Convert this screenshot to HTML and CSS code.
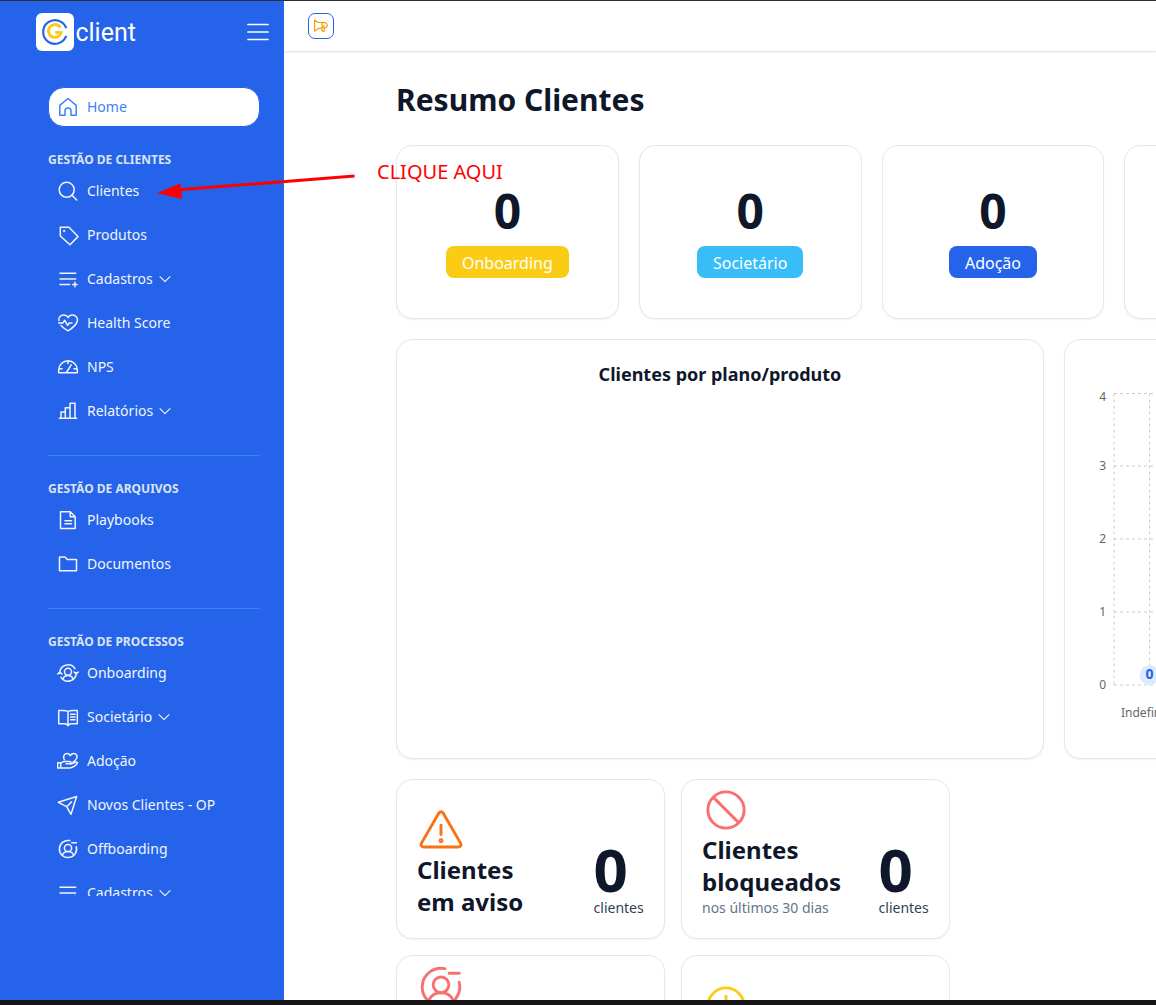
FILE: index.html
```html
<!DOCTYPE html>
<html lang="pt-BR">
<head>
<meta charset="utf-8">
<title>Gclient</title>
<link rel="stylesheet" href="styles.css">
</head>
<body>
<svg class="sprite" aria-hidden="true">
  <symbol id="list" viewBox="0 0 22 22"><path d="M3 5.3H18.700M3 11H18.700M3 16.500H12.700M15.600 16.500H20.100M17.900 14.300V18.700"/></symbol>
  <symbol id="chev" viewBox="0 0 12 12"><path d="M1 3.600L6 8.600L11 3.600"/></symbol>
  <symbol id="off" viewBox="0 0 22 22"><path d="M12.800 2.600A8.600 8.600 0 1 0 19.300 8.800M14.700 4.700H19.400"/><circle cx="11" cy="10" r="3.600"/><path d="M5.300 17.400C6.200 15 8.300 13.600 11 13.600S15.800 15 16.700 17.400"/></symbol>
</svg>
<div class="app">
  <aside class="sidebar">
    <div class="brand">
      <div class="logo">
        <svg class="logo-mark" viewBox="0 0 38 38">
          <path class="ring" d="M30.600 15A12 12 0 1 0 30.600 23"/>
          <path class="gee" d="M24.600 14.300A6.500 6.500 0 1 0 25.500 19.500H19.500"/>
        </svg>
        <span class="logo-text">client</span>
      </div>
      <svg class="burger" viewBox="0 0 22 18"><path d="M1 1.500H21M1 9H21M1 16.500H21"/></svg>
    </div>
    <nav class="nav">
      <a class="item active"><svg class="ico" viewBox="0 0 22 22"><path d="M2.800 19.300V9.300L11 2.500L19.200 9.300V19.300H14V15A3 3 0 0 0 8 15V19.300Z"/></svg>Home</a>
      <h2 class="group">GESTÃO DE CLIENTES</h2>
      <a class="item"><svg class="ico" viewBox="0 0 22 22"><circle cx="9.700" cy="9.800" r="7.500"/><path d="M15 15.200L19.700 20"/></svg>Clientes</a>
      <a class="item"><svg class="ico" viewBox="0 0 22 22"><path d="M3.300 3.300H12L21 12.600L13 20.700L3.300 12Z"/><circle cx="7.200" cy="7" r=".4"/></svg>Produtos</a>
      <a class="item"><svg class="ico"><use href="#list"/></svg>Cadastros<svg class="chev"><use href="#chev"/></svg></a>
      <a class="item"><svg class="ico" viewBox="0 0 22 22"><path d="M2 8.500C1 5 4 3 6.500 3C8.500 3 10.300 4 11 5.500C11.700 4 13.500 3 15.500 3C19 3 21 6 20.300 9C19.500 13 14 17 11 18.800C8.500 17.400 6 15.500 4 13.400M1.700 11H5.800L7.800 8.300L10.600 13.300L12.300 11H15"/></svg>Health Score</a>
      <a class="item"><svg class="ico" viewBox="0 0 22 22"><path d="M1.700 16.700H20.300V14A9.300 9.300 0 0 0 1.700 14ZM11 4.700V7.500M2 12.800H5M17 12.800H20M9.700 16L14.200 8.800"/></svg>NPS</a>
      <a class="item"><svg class="ico" viewBox="0 0 22 22"><path d="M2.300 18.200H19.700M4 18V12H8.300M8.300 18V7.700H13M13 18V3.300H18V18"/></svg>Relatórios<svg class="chev"><use href="#chev"/></svg></a>
      <hr class="rule">
      <h2 class="group">GESTÃO DE ARQUIVOS</h2>
      <a class="item"><svg class="ico" viewBox="0 0 22 22"><path d="M3.500 2.700H13.200L18.200 7.700V19.500H3.500ZM13.200 2.700V7.700H18.200M8 11.800H14.500M8 14.800H14.500"/></svg>Playbooks</a>
      <a class="item"><svg class="ico" viewBox="0 0 22 22"><path d="M2.500 17.700V3.900H8L10.300 6.500H19.500V17.700Z"/></svg>Documentos</a>
      <hr class="rule">
      <h2 class="group">GESTÃO DE PROCESSOS</h2>
      <a class="item"><svg class="ico" viewBox="0 0 22 22"><path d="M2.800 11.500A8.300 8.300 0 0 1 18 6.600M19.200 10.500A8.300 8.300 0 0 1 4 15.400M.7 12L2.800 10L4.900 12M17.100 10L19.200 12L21.300 10"/><circle cx="11" cy="9.700" r="3.500"/><path d="M5.800 17.200C6.700 14.800 8.500 13.500 11 13.500S15.300 14.800 16.200 17.200"/></svg>Onboarding</a>
      <a class="item"><svg class="ico" viewBox="0 0 22 22"><path d="M11 5.500C9.500 4.500 8 4.500 6 4.500H1.700V17.700H7.500C9.500 17.700 10.500 18.300 11 19.800C11.500 18.300 12.500 17.700 14.500 17.700H20.300V4.500H16C14 4.500 12.500 4.500 11 5.500V19M13.600 8.300H18M13.600 11H18M13.600 13.700H18"/></svg>Societário<svg class="chev"><use href="#chev"/></svg></a>
      <a class="item"><svg class="ico" viewBox="0 0 22 22"><path d="M.6 12.700H3.700V18H.6ZM3.700 13.500L6.500 11.400H12.500C14.500 11.400 14.300 13.800 12.500 13.800H9M3.700 18H12.500C15.500 18 19 15.500 20.300 13.300C20.800 12.200 19.500 11.700 18.500 12.300L13.800 14M7.300 9.500C5.600 6.500 7.500 3.600 10 3.600C11.500 3.600 12.700 4.500 13.300 5.600C14 4.300 15.200 3.500 16.800 3.500C19.500 3.500 20.800 6.200 19.500 8.500C18.800 9.800 17.500 11 16 12"/></svg>Adoção</a>
      <a class="item"><svg class="ico" viewBox="0 0 22 22"><path d="M1.300 8.300L19.600 2.500L14 20.300L9.700 12.700ZM9.700 12.700L14.500 7.900"/></svg>Novos Clientes - OP</a>
      <a class="item"><svg class="ico"><use href="#off"/></svg>Offboarding</a>
      <a class="item"><svg class="ico"><use href="#list"/></svg>Cadastros<svg class="chev"><use href="#chev"/></svg></a>
    </nav>
  </aside>
  <div class="page">
    <header class="topbar">
      <button class="announce"><svg viewBox="0 0 16 16"><path d="M1.500 2V13.200L5.200 10.500L9.200 9.800V4.700L5.200 4.500ZM9.200 4.700H12.500C14.800 5.500 14.800 8.800 12.800 9.700H9.200M8.200 10.200L9.400 13.200H11.200L10.900 7.500"/></svg></button>
    </header>
    <main class="content">
      <h1 class="title">Resumo Clientes</h1>
      <section class="phases">
        <div class="card phase"><strong>0</strong><span class="tag yellow">Onboarding</span></div>
        <div class="card phase"><strong>0</strong><span class="tag sky">Societário</span></div>
        <div class="card phase"><strong>0</strong><span class="tag blue">Adoção</span></div>
        <div class="card phase"></div>
      </section>
      <section class="charts">
        <div class="card chart"><h3>Clientes por plano/produto</h3></div>
        <div class="card chart">
          <svg class="plot" width="300" height="418" viewBox="0 0 300 418">
            <path class="grid" d="M49 53.500H300M49 126H300M49 199H300M49 272H300M49 345H300M49 53.500V345M84.600 53.500V345"/>
            <g class="ticks"><text x="41" y="61">4</text><text x="41" y="130">3</text><text x="41" y="203">2</text><text x="41" y="276">1</text><text x="41" y="349">0</text></g>
            <text class="cat" x="56" y="377">Indefinido</text>
            <circle class="dot" cx="84.500" cy="335" r="10"/>
            <text class="val" x="84.500" y="339">0</text>
          </svg>
        </div>
      </section>
      <section class="stats">
        <div class="card stat">
          <div class="what"><svg class="big orange" viewBox="0 0 22 22"><path d="M9.900 3.400Q11 1.800 12.100 3.400L19.900 16.900Q20.700 18.700 18.900 18.800H3.100Q1.300 18.700 2.100 16.900ZM11 8.800V13.100"/><circle cx="11" cy="15.900" r=".45"/></svg><h4>Clientes<br>em aviso</h4></div>
          <div class="count"><strong>0</strong><span>clientes</span></div>
        </div>
        <div class="card stat">
          <div class="what"><svg class="big red" viewBox="0 0 22 22"><circle cx="11" cy="11" r="8.300"/><path d="M5.200 5.200L16.800 16.800"/></svg><h4>Clientes<br>bloqueados</h4><small>nos últimos 30 dias</small></div>
          <div class="count"><strong>0</strong><span>clientes</span></div>
        </div>
        <div class="card stat top"><svg class="big red raise"><use href="#off"/></svg></div>
        <div class="card stat top"><svg class="big gold" viewBox="0 0 22 22"><circle cx="11" cy="11" r="8.300"/><path d="M11 6.500V12.500"/></svg></div>
      </section>
    </main>
  </div>
</div>
<svg class="arrow" width="200" height="28" viewBox="0 0 200 28"><path d="M22 20.800L197.500 7" stroke="#f00" stroke-width="3" stroke-linecap="butt"/><path d="M0 24L23.500 14.500L25 30Z" fill="#f00"/></svg>
<span class="callout">CLIQUE AQUI</span>
</body>
</html>
```
FILE: styles.css
```css
* { box-sizing: border-box; }
body {
  margin: 0;
  height: 1005px;
  overflow: hidden;
  position: relative;
  border-top: 1px solid #2e2f33;
  border-bottom: 5px solid #161616;
  font-family: "Noto Sans", sans-serif;
  color: #0f172a;
  background: #fff;
}
h1, h2, h3, h4 { margin: 0; }
svg { fill: none; stroke-linecap: round; stroke-linejoin: round; flex: none; }
.sprite { position: absolute; width: 0; height: 0; }
.app { display: flex; height: 999px; overflow: hidden; }

.sidebar { width: 284px; flex: none; background: #2563eb; color: #f1f5f9; }
.brand { display: flex; justify-content: space-between; align-items: center; height: 62px; padding: 0 15px 0 36.400px; }
.logo { display: flex; align-items: center; gap: 1.500px; }
.logo-mark { width: 37.500px; height: 38px; background: #fff; border-radius: 6px; }
.ring { stroke: #2563eb; stroke-width: 2.2; stroke-linecap: butt; }
.gee { stroke: #facc15; stroke-width: 3; stroke-linecap: butt; }
.logo-text { font: 400 25px/30px Roboto, sans-serif; color: #fff; padding-top: 1px; }
.burger { width: 22px; height: 18px; stroke: #fff; stroke-width: 1.7; }
.nav { margin: 24px 24px 0 48px; height: 809px; overflow: hidden; }
.item { display: flex; align-items: center; height: 40px; margin-bottom: 4px; padding: 0 0 2px 9px; font-size: 14px; white-space: nowrap; }
.active { background: #fff; color: #3b82f6; border: 1px solid #2563eb; border-radius: 16px; padding-left: 8px; margin-bottom: 23px; }
.ico { width: 22px; height: 22px; margin: 2px 8px 0 0; stroke: currentColor; stroke-width: 1.5; }
.chev { width: 12px; height: 12px; margin: 2px 0 0 6px; stroke: currentColor; stroke-width: 1.1; }
.group { height: 21px; font-size: 12px; line-height: 20px; font-weight: 700; color: #dbe4f3; white-space: nowrap; }
.rule { border: 0; height: 1px; margin: 24px 0 23px; background: #3b82f6; }

.page { flex: 1; min-width: 0; overflow: hidden; }
.topbar { height: 51px; display: flex; align-items: center; padding-left: 24px; border-bottom: 1px solid #e2e8f0; box-shadow: 0 1px 2px rgba(0, 0, 0, .05); }
.announce { width: 26px; height: 26px; padding: 0; display: grid; place-items: center; border: 1px solid #2563eb; border-radius: 7px; background: #fff; }
.announce svg { width: 16px; height: 16px; stroke: #f59e0b; stroke-width: 1.2; }
.content { padding: 30px 0 0 112px; }
.title { font-size: 30px; line-height: 36px; height: 63px; }
.card { border: 1px solid #e2e8f0; border-radius: 16px; background: #fff; box-shadow: 0 1px 2px rgba(0, 0, 0, .05); }
.phases { display: grid; grid-template-columns: repeat(4, 222.800px); gap: 20px; }
.phase { height: 174px; display: flex; flex-direction: column; align-items: center; padding-top: 41px; }
.phase strong { font-size: 48px; line-height: 48px; margin-bottom: 11px; }
.tag { height: 32px; padding: 1px 16px 0; border-radius: 8px; color: #fff; font-size: 16px; line-height: 33px; }
.yellow { background: #facc15; }
.sky { background: #38bdf8; }
.blue { background: #2563eb; }
.charts { display: grid; grid-template-columns: 648px 648px; gap: 20px; margin-top: 20px; }
.chart { height: 420px; }
.chart h3 { text-align: center; font-size: 18px; line-height: 28px; padding-top: 20px; }
.plot { display: block; font-size: 12px; }
.plot text { fill: #666; }
.ticks { text-anchor: end; }
.grid { stroke: #ccc; stroke-dasharray: 3 3; stroke-linecap: butt; }
.dot { fill: #dbeafe; }
.plot .val { fill: #2563eb; font-size: 14px; font-weight: 700; text-anchor: middle; }
.stats { display: grid; grid-template-columns: 269px 269px; gap: 16px; margin-top: 20px; }
.stat { height: 160px; display: flex; justify-content: space-between; align-items: flex-end; padding: 0 20.300px 0 20px; }
.what { display: flex; flex-direction: column; padding-bottom: 20px; }
.what h4 { font-size: 24px; line-height: 32px; }
.what small { font-size: 14px; line-height: 20px; color: #64748b; }
.big { width: 48px; height: 48px; stroke-width: 1.35; }
.orange { stroke: #f97316; }
.red { stroke: #f87171; }
.gold { stroke: #facc15; }
.count { display: flex; flex-direction: column; padding-bottom: 20px; }
.count strong { font-size: 60px; line-height: 58px; }
.count span { font-size: 14px; line-height: 20px; color: #334155; }
.top { align-items: flex-start; padding-top: 26px; }
.raise { margin-top: -19.500px; }

.arrow { position: absolute; left: 157px; top: 168px; overflow: visible; }
.callout { position: absolute; left: 377px; top: 157px; font-size: 20px; line-height: 28px; color: #f00; white-space: nowrap; }
```
